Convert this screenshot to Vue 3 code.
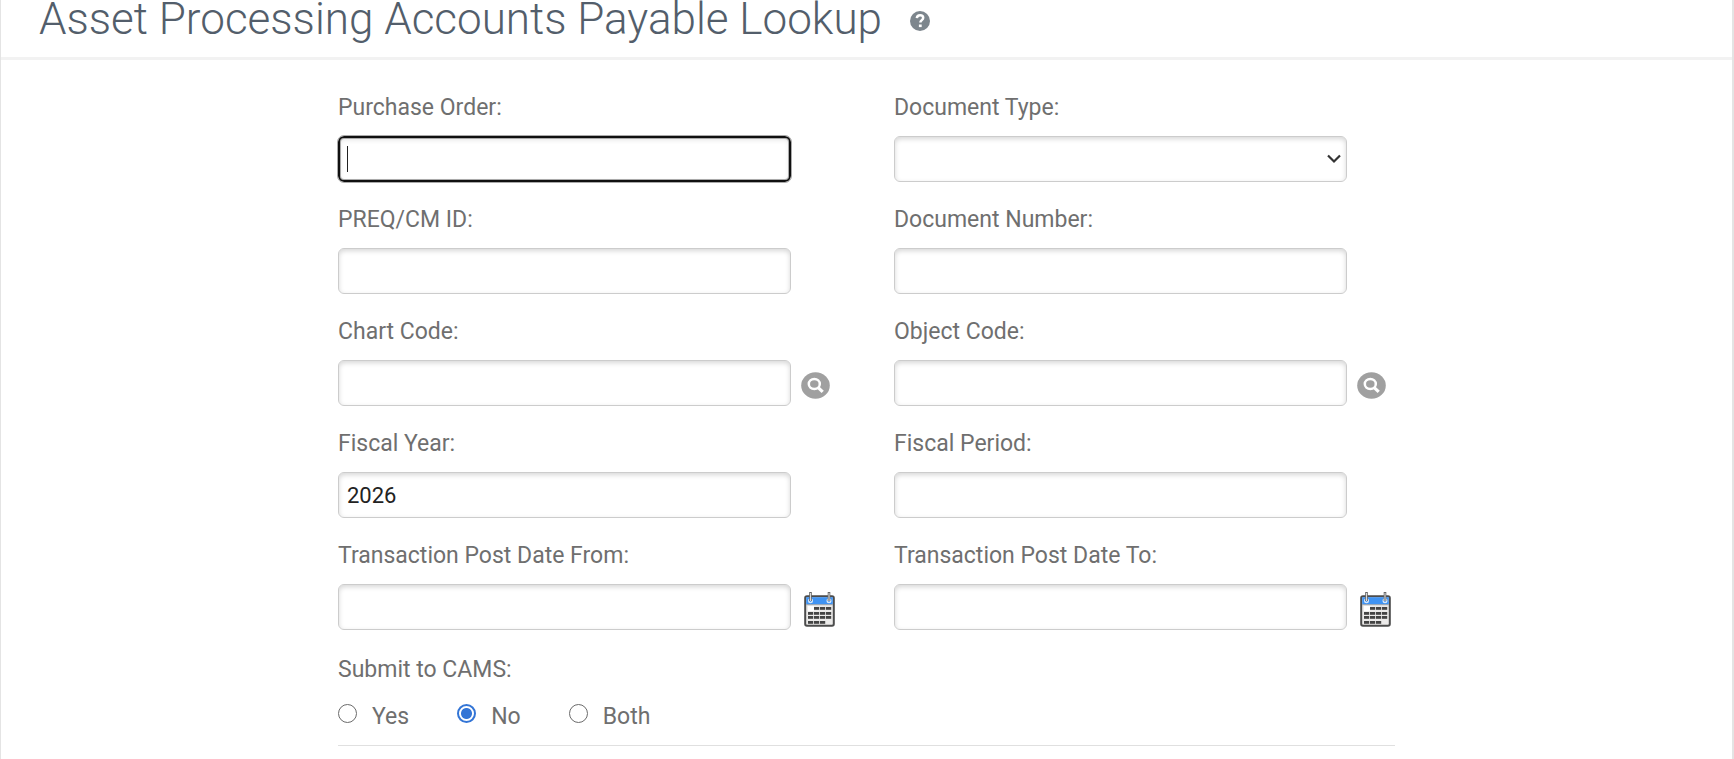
<script setup>
import { reactive, ref } from 'vue'

const rows = [
  [
    { id: 'purchaseOrder', label: 'Purchase Order:', active: true },
    { id: 'documentType', label: 'Document Type:', kind: 'select' },
  ],
  [
    { id: 'preqId', label: 'PREQ/CM ID:' },
    { id: 'documentNumber', label: 'Document Number:' },
  ],
  [
    { id: 'chartCode', label: 'Chart Code:', icon: 'search' },
    { id: 'objectCode', label: 'Object Code:', icon: 'search' },
  ],
  [
    { id: 'fiscalYear', label: 'Fiscal Year:' },
    { id: 'fiscalPeriod', label: 'Fiscal Period:' },
  ],
  [
    { id: 'dateFrom', label: 'Transaction Post Date From:', icon: 'calendar' },
    { id: 'dateTo', label: 'Transaction Post Date To:', icon: 'calendar' },
  ],
]
const fields = rows.flat()
const values = reactive({ fiscalYear: '2026' })
const submitted = ref('No')
const options = ['Yes', 'No', 'Both']
const cells = [
  [12, 15], [18, 15], [24, 15],
  [6, 20], [12, 20], [18, 20], [24, 20],
  [6, 24], [12, 24], [18, 24], [24, 24],
  [6, 29], [12, 29], [18, 29],
]
</script>

<template>
  <main class="page">
    <header class="header">
      <h1>Asset Processing Accounts Payable Lookup</h1>
      <a class="help" href="#" aria-label="Help">
        <svg width="20" height="20" viewBox="0 0 20 20">
          <circle cx="10" cy="10" r="10" fill="#7d868d" />
          <path d="M6.8 7.2C7 5.2 8.2 4.2 10.1 4.2c1.9 0 3.1 1.1 3.1 2.6 0 2.4-2.8 2.3-2.8 4.7" fill="none" stroke="#fff" stroke-width="2.5" />
          <rect x="8.9" y="13.5" width="2.8" height="2.6" fill="#fff" />
        </svg>
      </a>
    </header>

    <form class="form" @submit.prevent>
      <div class="grid">
        <div v-for="f in fields" :key="f.id" class="field">
          <label :for="f.id">{{ f.label }}</label>
          <div class="line">
            <div class="control">
              <select v-if="f.kind === 'select'" :id="f.id" class="box">
                <option value=""></option>
              </select>
              <input v-else :id="f.id" v-model="values[f.id]" class="box" :class="{ active: f.active }" type="text" />
              <svg v-if="f.kind === 'select'" class="chevron" width="14" height="10" viewBox="0 0 14 10">
                <path d="M1 1.5l6 6 6-6" fill="none" stroke="#333" stroke-width="2.2" />
              </svg>
            </div>
            <div class="side">
              <button v-if="f.icon === 'search'" type="button" class="search" :aria-label="'Search ' + f.label">
                <svg width="29" height="27" viewBox="0 0 29 27">
                  <ellipse cx="14.5" cy="13.5" rx="14.3" ry="13.2" fill="#a0a0a0" />
                  <ellipse cx="13.3" cy="12" rx="5.5" ry="5" fill="none" stroke="#fff" stroke-width="2.5" />
                  <path d="M17.2 15.7l4.5 4.2" stroke="#fff" stroke-width="3.2" />
                </svg>
              </button>
              <button v-if="f.icon === 'calendar'" type="button" class="calendar" :aria-label="'Choose date, ' + f.label">
                <svg width="31" height="35" viewBox="0 0 31 35">
                  <rect x="1.2" y="4.2" width="28.6" height="29.6" rx="1.8" fill="#ecebea" stroke="#4c4c4c" stroke-width="2" />
                  <rect x="2.2" y="5.2" width="26.6" height="7.3" fill="#3f93f3" />
                  <path d="M2.2 12.7h26.6" stroke="#9aa3ad" />
                  <rect x="4" y="14" width="6" height="5" fill="#fff" />
                  <rect v-for="c in cells" :key="c.join()" :x="c[0] - 2" :y="c[1]" width="5.2" height="2.8" fill="#444" />
                  <g fill="none">
                    <circle cx="6.5" cy="8.8" r="1.8" stroke="#d7e8fb" stroke-width="1.4" />
                    <circle cx="25" cy="8.8" r="1.8" stroke="#d7e8fb" stroke-width="1.4" />
                    <path d="M6.5 0v9M25 0v9" stroke="#666" stroke-width="2.6" />
                    <path d="M6.5 1v8M25 1v8" stroke="#d9d9d9" />
                  </g>
                </svg>
              </button>
            </div>
          </div>
        </div>
      </div>

      <fieldset class="cams">
        <legend>Submit to CAMS:</legend>
        <div class="options">
          <label v-for="o in options" :key="o" class="option">
            <input v-model="submitted" type="radio" name="cams" :value="o" />
            <span>{{ o }}</span>
          </label>
        </div>
      </fieldset>
    </form>
  </main>
</template>

<style>
body {
  background: #fff;
}
</style>

<style scoped>
.page {
  box-sizing: border-box;
  min-height: 100vh;
  border: solid #e4e4e4;
  border-width: 0 2px 0 1px;
  font-family: Roboto, "Liberation Sans", sans-serif;
  font-size: 23px;
  line-height: 28px;
  color: #6f6f6f;
}
.header {
  display: flex;
  align-items: center;
  gap: 28px;
  height: 57px;
  padding: 0 38px;
  border-bottom: 3px solid #f2f2f2;
}
h1 {
  margin: 0 0 18px;
  font-size: 44px;
  line-height: 37px;
  font-weight: 300;
  color: #535e6b;
}
.help {
  display: flex;
  margin-bottom: 16px;
}
.form {
  max-width: 1057px;
  margin: 0 auto;
  padding-top: 34px;
}
.grid {
  display: grid;
  grid-template-columns: repeat(2, 1fr);
  gap: 24px 55px;
}
.field > label {
  display: block;
  margin-bottom: 14px;
}
.line {
  display: flex;
}
.control {
  position: relative;
  flex: 1;
}
.box {
  display: block;
  box-sizing: border-box;
  width: 100%;
  height: 46px;
  margin: 0;
  padding: 0 8px;
  border: 1px solid #ccc;
  border-radius: 6px;
  background: #fff;
  box-shadow: inset 0 2px 5px rgba(0, 0, 0, 0.16);
  font: inherit;
  font-size: 22px;
  color: #222;
  appearance: none;
  outline: none;
}
.box.active {
  border: 2px solid #101010;
  outline: 1px solid #aaa;
  background: linear-gradient(#222, #222) 7px center / 1px 26px no-repeat #fff;
  box-shadow: inset 0 0 0 1px #aaa, inset 0 2px 5px rgba(0, 0, 0, 0.1);
}
.chevron {
  position: absolute;
  right: 6px;
  top: 18px;
}
.side {
  display: flex;
  align-items: center;
  width: 48px;
}
button {
  display: flex;
  padding: 0;
  border: 0;
  background: none;
}
.search {
  margin: 4px 0 0 10px;
}
.calendar {
  margin: 4px 0 0 13px;
}
.cams {
  margin: 26px 0 0;
  padding: 0 0 14px;
  border: 0;
  border-bottom: 1px solid #e0e0e0;
}
legend {
  padding: 0;
}
.options {
  display: flex;
  gap: 48px;
  margin-top: 19px;
}
.option {
  display: flex;
  gap: 15px;
}
input[type="radio"] {
  appearance: none;
  box-sizing: border-box;
  width: 19px;
  height: 19px;
  margin: 1px 0 0;
  border: 1px solid #6b6b6b;
  border-radius: 50%;
}
input[type="radio"]:checked {
  border: 2px solid #3375d6;
  background: radial-gradient(circle, #3375d6 5px, #fff 6px);
}
</style>
